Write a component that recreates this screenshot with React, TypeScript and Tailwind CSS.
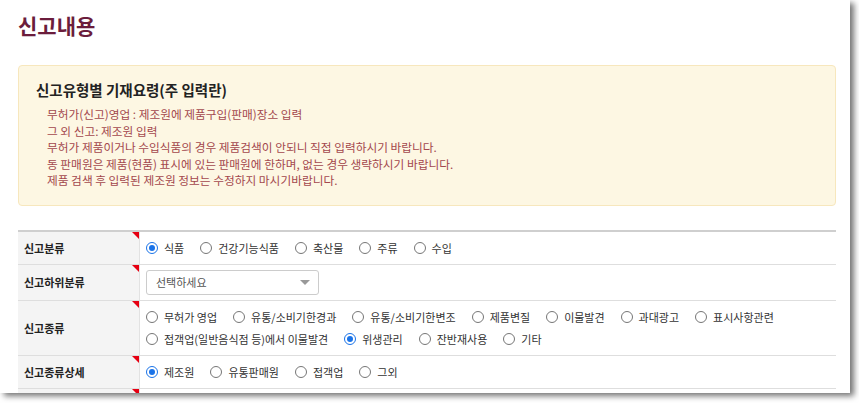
import React from 'react';

interface Opt {
  label: string;
  checked?: boolean;
}

const font = { fontFamily: '"Noto Sans CJK KR", "Noto Sans", sans-serif' };

const noticeLines = [
  '무허가(신고)영업 : 제조원에 제품구입(판매)장소 입력',
  '그 외 신고: 제조원 입력',
  '무허가 제품이거나 수입식품의 경우 제품검색이 안되니 직접 입력하시기 바랍니다.',
  '동 판매원은 제품(현품) 표시에 있는 판매원에 한하며, 없는 경우 생략하시기 바랍니다.',
  '제품 검색 후 입력된 제조원 정보는 수정하지 마시기바랍니다.',
];

const category: Opt[] = [
  { label: '식품', checked: true },
  { label: '건강기능식품' },
  { label: '축산물' },
  { label: '주류' },
  { label: '수입' },
];

const kindsLine1: Opt[] = [
  { label: '무허가 영업' },
  { label: '유통/소비기한경과' },
  { label: '유통/소비기한변조' },
  { label: '제품변질' },
  { label: '이물발견' },
  { label: '과대광고' },
  { label: '표시사항관련' },
];

const kindsLine2: Opt[] = [
  { label: '접객업(일반음식점 등)에서 이물발견' },
  { label: '위생관리', checked: true },
  { label: '잔반재사용' },
  { label: '기타' },
];

const detail: Opt[] = [
  { label: '제조원', checked: true },
  { label: '유통판매원' },
  { label: '접객업' },
  { label: '그외' },
];

const Radio = ({ opt, name }: { opt: Opt; name: string }) => (
  <label className="flex items-center mr-[16px] text-[11px] text-[#333] whitespace-nowrap">
    {opt.checked ? (
      <span className="w-[12px] h-[12px] rounded-full border border-[#1a73e8] flex items-center justify-center mr-[6px] bg-white">
        <span className="w-[6px] h-[6px] rounded-full bg-[#1a73e8]" />
      </span>
    ) : (
      <span className="w-[12px] h-[12px] rounded-full border border-[#767676] mr-[6px] bg-white" />
    )}
    <input type="radio" name={name} defaultChecked={opt.checked} className="hidden" />
    {opt.label}
  </label>
);

const Row = ({ label, height, children }: { label: string; height: string; children: React.ReactNode }) => (
  <div className={`flex border-b border-[#dedede] ${height}`}>
    <div className="relative w-[122px] shrink-0 bg-[#f4f4f4] border-r border-[#e2e2e2] flex items-center pl-[6px] text-[11px] font-bold text-[#222]">
      {label}
      <span className="absolute top-0 right-0 w-0 h-0 border-t-[7px] border-t-[#e60012] border-l-[7px] border-l-transparent" />
    </div>
    <div className="flex-1 pl-[6px] flex flex-col justify-center">{children}</div>
  </div>
);

export default function App() {
  return (
    <div className="w-[859px] h-[403px] bg-white" style={font}>
      <div className="w-[850px] h-[393px] bg-white overflow-hidden shadow-[4px_3px_6px_rgba(0,0,0,0.55)] px-[18px] pt-[10px]">
        <h1 className="text-[21px] font-bold leading-[30px] text-[#6b1d3c]">신고내용</h1>

        <div className="mt-[25px] w-[818px] h-[141px] rounded border border-[#f7e7bd] bg-[#fdf7e3] pl-[17px] pt-[14px]">
          <h2 className="text-[14.5px] font-bold leading-[20px] text-[#222]">신고유형별 기재요령(주 입력란)</h2>
          <ul className="mt-[6px] pl-[11px]">
            {noticeLines.map((line, i) => (
              <li key={i} className="text-[11.7px] leading-[16.5px] text-[#a3474d]">
                {line}
              </li>
            ))}
          </ul>
        </div>

        <div className="mt-[24px] w-[818px] border-t-2 border-[#cfcfcf]">
          <Row label="신고분류" height="h-[33px]">
            <div className="flex">
              {category.map((o, i) => (
                <Radio key={i} opt={o} name="cat" />
              ))}
            </div>
          </Row>
          <Row label="신고하위분류" height="h-[36px]">
            <div className="w-[173px] h-[25px] border border-[#cccccc] rounded-[3px] bg-white flex items-center justify-between pl-[9px] pr-[8px]">
              <span className="text-[11px] text-[#555]">선택하세요</span>
              <span className="w-0 h-0 border-l-[5px] border-l-transparent border-r-[5px] border-r-transparent border-t-[5px] border-t-[#999]" />
            </div>
          </Row>
          <Row label="신고종류" height="h-[55px]">
            <div className="flex flex-col gap-[5px]">
              <div className="flex">
                {kindsLine1.map((o, i) => (
                  <Radio key={i} opt={o} name="kind" />
                ))}
              </div>
              <div className="flex">
                {kindsLine2.map((o, i) => (
                  <Radio key={i} opt={o} name="kind" />
                ))}
              </div>
            </div>
          </Row>
          <Row label="신고종류상세" height="h-[33px]">
            <div className="flex">
              {detail.map((o, i) => (
                <Radio key={i} opt={o} name="detail" />
              ))}
            </div>
          </Row>
          <Row label="" height="h-[33px]">
            <div />
          </Row>
        </div>
      </div>
    </div>
  );
}
